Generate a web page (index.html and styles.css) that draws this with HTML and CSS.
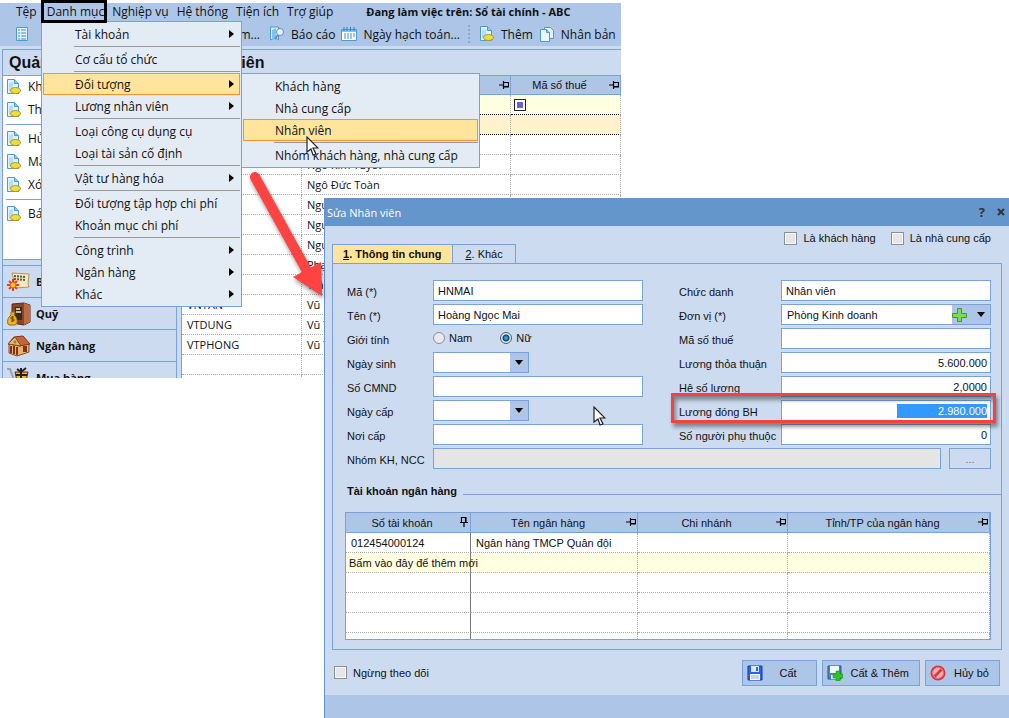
FILE: index.html
```html
<!DOCTYPE html>
<html lang="vi">
<head>
    <meta charset="UTF-8">
    <meta name="viewport" content="width=device-width, initial-scale=1.0">
    <title>Sửa Nhân viên</title>
    <link rel="stylesheet" href="styles.css">
</head>
<body>
    <svg class="symbols" aria-hidden="true">
        <symbol id="pin" viewBox="0 0 10 8">
            <path d="M0 4h4M4.500 0v8M5 1.500h4.500v4H5M5 6h5" fill="none" stroke="#000" stroke-width="1.2"/>
        </symbol>
        <symbol id="doc" viewBox="0 0 16 16">
            <path d="M1.500.5h7l4 4v10h-11z" fill="#dff1fc" stroke="#4a9bd0"/>
            <path d="M8.500.5v4h4" fill="#8ccaf0" stroke="#4a9bd0"/>
            <path d="M3 12V4l4-1v9z" fill="#b5def5"/>
            <ellipse cx="9.500" cy="11.500" rx="5" ry="3" fill="#f2dc3c" stroke="#a99a20"/>
            <path d="M5 11l-1 1M14 11l1 1M7 14l-1 1M12 14l1 1" stroke="#a99a20"/>
        </symbol>
        <symbol id="arrow" viewBox="0 0 5 8"><path d="M0 0l5 4-5 4z"/></symbol>
        <symbol id="down" viewBox="0 0 8 5"><path d="M0 0h8L4 5z"/></symbol>
        <symbol id="cursor" viewBox="0 0 13 20">
            <path d="M1 1v15l4-3 2 6 3-1-3-6h5z" fill="#fff" stroke="#222" stroke-width="1.2"/>
        </symbol>
    </svg>

    <div class="main-window">
        <div class="menubar">
            <a href="#">Tệp</a>
            <a href="#">Danh mục</a>
            <a href="#">Nghiệp vụ</a>
            <a href="#">Hệ thống</a>
            <a href="#">Tiện ích</a>
            <a href="#">Trợ giúp</a>
            <b>Đang làm việc trên: Sổ tài chính - ABC</b>
        </div>
        <div class="toolbar">
            <div class="toolbar-start">
                <button type="button" aria-label="Danh sách">
                    <svg class="icon" viewBox="0 0 16 16"><path d="M2.500 1.500h11v13h-11z" fill="#e3f3fd" stroke="#4a9bd0"/><path d="M4 4h2M4 7h2M4 10h2M4 13h2M7 4h5M7 7h5M7 10h5M7 13h5" stroke="#3e8fca"/></svg>
                </button>
                <button type="button">Tìm...</button>
            </div>
            <button type="button">
                <svg class="icon" viewBox="0 0 16 16"><path d="M1.500 1h8v13l-3-2-5 2z" fill="#d9f0fc" stroke="#4a9bd0"/><path d="M3 4l4-2v10l-4 2z" fill="#7cc4ee"/><circle cx="11" cy="6" r="3.500" fill="#eaf7ff" stroke="#5a8fc8"/><path d="M9 9l-3 4" stroke="#5a8fc8" stroke-width="2"/></svg>
                Báo cáo
            </button>
            <button type="button">
                <svg class="icon" viewBox="0 0 16 16"><path d="M.5 3.500h15v11H.5z" fill="#fff" stroke="#4a9bd0"/><path d="M1 4h14v2H1z" fill="#7cc4ee"/><path d="M3 1v4M6 1v4M9.500 1v4M13 1v4" stroke="#357fb8"/><path d="M3 8h2M6 8h2M9 8h2M12 8h2M3 10h2M6 10h2M9 10h2M12 10h2M3 12h2M6 12h2M9 12h2" stroke="#3e8fca"/></svg>
                Ngày hạch toán...
            </button>
            <span class="grip"></span>
            <button type="button"><svg class="icon"><use href="#doc"/></svg>Thêm</button>
            <button type="button">
                <svg class="icon" viewBox="0 0 16 16"><path d="M5.500 1.500h6l3 3v8h-9z" fill="#dff1fc" stroke="#4a9bd0"/><path d="M1.500 3.500h6l3 3v9h-9z" fill="#eef8fe" stroke="#4a9bd0"/><path d="M7.500 3.500v3h3" fill="#7cc4ee" stroke="#4a9bd0"/></svg>
                Nhân bản
            </button>
        </div>

        <div class="workspace">
            <div class="sidebar">
                <h2>Quản lý</h2>
                <div class="tasks">
                    <a href="#"><svg class="icon"><use href="#doc"/></svg>Khách</a>
                    <a href="#"><svg class="icon"><use href="#doc"/></svg>Thêm</a>
                    <hr>
                    <a href="#"><svg class="icon"><use href="#doc"/></svg>Hủy</a>
                    <a href="#"><svg class="icon"><use href="#doc"/></svg>Mẫu</a>
                    <a href="#"><svg class="icon"><use href="#doc"/></svg>Xóa</a>
                    <hr>
                    <a href="#"><svg class="icon"><use href="#doc"/></svg>Báo</a>
                </div>
                <div class="modules">
                    <a href="#">
                        <svg viewBox="0 0 24 24"><path d="M5 3l17 1-1 10 1 3-13 1z" fill="#f7e8bd" stroke="#b5935a"/><path d="M7 6l12 1M7 9l11 1" stroke="#555" stroke-width="2" stroke-dasharray="2 1"/><path d="M6 9v12M0 15h12M2 11l8 8M10 11l-8 8" stroke="#e8401e" stroke-width="2"/><circle cx="6" cy="15" r="2.500" fill="#ffc21e"/></svg>
                        Bàn
                    </a>
                    <a href="#">
                        <svg viewBox="0 0 24 24"><path d="M5 2l12-1 6 2v17l-6 3-12-2z" fill="#8a4526" stroke="#5b2a16"/><path d="M17 1l6 2v17l-6 3z" fill="#b86d44"/><path d="M8 5h7v13H8z" fill="#372c22"/><path d="M9 10h5M9 7h4" stroke="#c7c0a0" stroke-width="2"/><path d="M4 10h4l-1 3c4 3 4 9 1 10H2c-3-2-1-8 2-10z" fill="#f0b429" stroke="#9b6b12"/><path d="M7 15H4v2h3v2H4M5.500 14v6" stroke="#7a4a08" fill="none"/></svg>
                        Quỹ
                    </a>
                    <a href="#">
                        <svg viewBox="0 0 24 24"><path d="M2 10v9l8 3 12-4v-8z" fill="#e9b071" stroke="#8a4a20"/><path d="M1 10l6-7 9-1 7 8-10 2z" fill="#c9623a" stroke="#7c3517"/><path d="M1 10l7-7 6 9z" fill="#eeb36c" stroke="#8a4a20"/><path d="M4 12v7M7 12v8M10 13v8" stroke="#7c3517" stroke-width="2"/><path d="M16 12h4v6h-4z" fill="#7c3517"/><circle cx="8" cy="8" r="1.500" fill="#5d9d37"/></svg>
                        Ngân hàng
                    </a>
                    <a href="#">
                        <svg viewBox="0 0 24 24"><path d="M0 3h3l4 11h12" fill="none" stroke="#99a3ad" stroke-width="2"/><path d="M8 6h13l-2 9H10z" fill="#f5b51b" stroke="#40300a"/><path d="M14 2v13M9 9h11M10 3l4 3 5-4" fill="none" stroke="#222" stroke-width="2"/><circle cx="10" cy="20" r="2"/></svg>
                        Mua hàng
                    </a>
                </div>
            </div>
            <div class="list">
                <h2>Nhân viên</h2>
                <table class="grid staff">
                    <colgroup><col class="c-code"><col><col class="c-tax"></colgroup>
                    <thead>
                        <tr>
                            <th>Mã</th>
                            <th>Tên<svg class="pin"><use href="#pin"/></svg></th>
                            <th>Mã số thuế<svg class="pin"><use href="#pin"/></svg></th>
                        </tr>
                    </thead>
                    <tbody>
                        <tr class="filter"><td></td><td></td><td><span class="filter-mark"></span></td></tr>
                        <tr class="current"><td></td><td></td><td></td></tr>
                        <tr><td></td><td></td><td></td></tr>
                        <tr><td></td><td>Ngô Kim Tuyết</td><td></td></tr>
                        <tr><td></td><td>Ngô Đức Toàn</td><td></td></tr>
                        <tr><td></td><td>Nguyễn</td><td></td></tr>
                        <tr><td></td><td>Nguyễn</td><td></td></tr>
                        <tr><td></td><td>Nguyễn</td><td></td></tr>
                        <tr><td></td><td>Phạm</td><td></td></tr>
                        <tr><td></td><td>Trần</td><td></td></tr>
                        <tr><td>VNTAN</td><td>Vũ</td><td></td></tr>
                        <tr><td>VTDUNG</td><td>Vũ T</td><td></td></tr>
                        <tr><td>VTPHONG</td><td>Vũ T</td><td></td></tr>
                        <tr><td></td><td></td><td></td></tr>
                        <tr><td></td><td></td><td></td></tr>
                    </tbody>
                </table>
            </div>
        </div>
    </div>

    <div class="menu menu-main">
        <a href="#">Tài khoản<svg><use href="#arrow"/></svg></a>
        <hr>
        <a href="#">Cơ cấu tổ chức</a>
        <hr>
        <a href="#" class="active">Đối tượng<svg><use href="#arrow"/></svg></a>
        <a href="#">Lương nhân viên<svg><use href="#arrow"/></svg></a>
        <hr>
        <a href="#">Loại công cụ dụng cụ</a>
        <a href="#">Loại tài sản cố định</a>
        <hr>
        <a href="#">Vật tư hàng hóa<svg><use href="#arrow"/></svg></a>
        <hr>
        <a href="#">Đối tượng tập hợp chi phí</a>
        <a href="#">Khoản mục chi phí</a>
        <hr>
        <a href="#">Công trình<svg><use href="#arrow"/></svg></a>
        <a href="#">Ngân hàng<svg><use href="#arrow"/></svg></a>
        <a href="#">Khác<svg><use href="#arrow"/></svg></a>
    </div>
    <div class="menu menu-sub">
        <a href="#">Khách hàng</a>
        <a href="#">Nhà cung cấp</a>
        <a href="#" class="active">Nhân viên</a>
        <hr>
        <a href="#">Nhóm khách hàng, nhà cung cấp</a>
    </div>
    <div class="menu-frame"></div>
    <svg class="cursor cursor-menu"><use href="#cursor"/></svg>

    <form class="dialog">
        <div class="titlebar">
            <span>Sửa Nhân viên</span>
            <button type="button">?</button>
            <button type="button" aria-label="Đóng"><svg viewBox="0 0 8 8"><path d="M1 1l6 6M7 1L1 7" stroke="#333" stroke-width="2"/></svg></button>
        </div>
        <div class="dialog-body">
            <div class="dialog-top">
                <div class="tabs">
                    <button type="button" class="selected"><u>1</u>. Thông tin chung</button>
                    <button type="button"><u>2</u>. Khác</button>
                </div>
                <div class="kinds">
                    <label><input type="checkbox">Là khách hàng</label>
                    <label><input type="checkbox">Là nhà cung cấp</label>
                </div>
            </div>
            <div class="panel">
                <div class="fields">
                    <label for="code">Mã (*)</label>
                    <input type="text" id="code" value="HNMAI">
                    <label for="job" class="second">Chức danh</label>
                    <input type="text" id="job" value="Nhân viên">

                    <label for="name">Tên (*)</label>
                    <input type="text" id="name" value="Hoàng Ngọc Mai">
                    <label for="unit" class="second">Đơn vị (*)</label>
                    <div class="combo">
                        <select id="unit"><option>Phòng Kinh doanh</option></select>
                        <button type="button" aria-label="Thêm đơn vị"><svg class="icon" viewBox="0 0 16 16"><path d="M5.500 1.500h4v5h5v4h-5v4h-4v-4h-5v-4h5z" fill="#7ed957" stroke="#3c9b25"/></svg></button>
                        <span class="drop"><svg><use href="#down"/></svg></span>
                    </div>

                    <span>Giới tính</span>
                    <div class="radios">
                        <label><input type="radio" name="sex">Nam</label>
                        <label><input type="radio" name="sex" checked>Nữ</label>
                    </div>
                    <label for="tax" class="second">Mã số thuế</label>
                    <input type="text" id="tax">

                    <label for="birth">Ngày sinh</label>
                    <div class="combo date">
                        <select id="birth"><option></option></select>
                        <span class="drop"><svg><use href="#down"/></svg></span>
                    </div>
                    <label for="agreed" class="second">Lương thỏa thuận</label>
                    <input type="text" id="agreed" class="number" value="5.600.000">

                    <label for="idno">Số CMND</label>
                    <input type="text" id="idno">
                    <label for="rate" class="second">Hệ số lương</label>
                    <input type="text" id="rate" class="number" value="2,0000">

                    <label for="issued">Ngày cấp</label>
                    <div class="combo date">
                        <select id="issued"><option></option></select>
                        <span class="drop"><svg><use href="#down"/></svg></span>
                    </div>
                    <label for="insured" class="second">Lương đóng BH</label>
                    <div class="combo editing">
                        <input type="text" id="insured" class="number" value="2.980.000">
                        <div class="highlight"></div>
                    </div>

                    <label for="place">Nơi cấp</label>
                    <input type="text" id="place">
                    <label for="dependants" class="second">Số người phụ thuộc</label>
                    <input type="text" id="dependants" class="number" value="0">

                    <label for="group">Nhóm KH, NCC</label>
                    <div class="group">
                        <input type="text" id="group" disabled>
                        <button type="button" disabled>...</button>
                    </div>
                </div>
                <svg class="cursor cursor-form"><use href="#cursor"/></svg>

                <h3>Tài khoản ngân hàng</h3>
                <div class="accounts-box">
                    <table class="grid accounts">
                        <colgroup><col class="c-number"><col class="c-bank"><col class="c-branch"><col></colgroup>
                        <thead>
                            <tr>
                                <th>Số tài khoản<svg class="pin pinned"><use href="#pin"/></svg></th>
                                <th>Tên ngân hàng<svg class="pin"><use href="#pin"/></svg></th>
                                <th>Chi nhánh<svg class="pin"><use href="#pin"/></svg></th>
                                <th>Tỉnh/TP của ngân hàng<svg class="pin"><use href="#pin"/></svg></th>
                            </tr>
                        </thead>
                        <tbody>
                            <tr><td>012454000124</td><td>Ngân hàng TMCP Quân đội</td><td></td><td></td></tr>
                            <tr class="add"><td>Bấm vào đây để thêm mới</td><td></td><td></td><td></td></tr>
                            <tr><td></td><td></td><td></td><td></td></tr>
                            <tr><td></td><td></td><td></td><td></td></tr>
                            <tr><td></td><td></td><td></td><td></td></tr>
                            <tr><td></td><td></td><td></td><td></td></tr>
                        </tbody>
                    </table>
                </div>
            </div>
            <div class="actions">
                <label><input type="checkbox">Ngừng theo dõi</label>
                <button type="button">
                    <svg class="icon" viewBox="0 0 16 16"><path d="M1 1h14v14H1z" fill="#2f62ec" stroke="#1537b0"/><path d="M4 1h8v6H4z" fill="#dce8fb"/><path d="M9 2h2v4H9z" fill="#2f62ec"/><path d="M3 9h10v6H3z" fill="#fff"/><path d="M4 11h8M4 13h8" stroke="#8aa5e0"/></svg>
                    <span>Cất</span>
                </button>
                <button type="button">
                    <svg class="icon" viewBox="0 0 16 16"><path d="M1 1h13v13H1z" fill="#4b86bd" stroke="#245a8c"/><path d="M3 1h9v7H3z" fill="#f6fafd"/><path d="M4 10h7v4H4z" fill="#dce6ee"/><path d="M9 6h4v3h3v4h-3v3H9v-3H6V9h3z" fill="#2cc427" stroke="#15861a" stroke-width=".5"/></svg>
                    <span>Cất &amp; Thêm</span>
                </button>
                <button type="button">
                    <svg class="icon" viewBox="0 0 16 16"><circle cx="8" cy="8" r="7.500" fill="#e0303a"/><circle cx="8" cy="8" r="5" fill="#f3b5b8"/><path d="M4.500 11.500l7-7" stroke="#e0303a" stroke-width="2.500"/><circle cx="8" cy="8" r="5.500" fill="none" stroke="#f7c4c6" stroke-width=".5"/></svg>
                    <span>Hủy bỏ</span>
                </button>
            </div>
        </div>
        <div class="statusbar"></div>
    </form>

    <svg class="red-arrow" viewBox="0 0 80 130">
        <path d="M10 7L62 101" stroke="#ff4242" stroke-width="10" stroke-linecap="round"/>
        <path d="M48 107l28-15 1 34z" fill="#ff4242"/>
    </svg>
</body>
</html>
```
FILE: styles.css
```css
* {
    box-sizing: border-box;
}

body {
    margin: 0;
    min-height: 100vh;
    background-color: #fff;
    color: #111;
    font-family: "Open Sans", "Noto Sans", sans-serif;
    font-size: 12px;
    position: relative;
    overflow: hidden;
}

a {
    color: inherit;
    text-decoration: none;
}

button {
    font: inherit;
    color: inherit;
    border: none;
    background: none;
    padding: 0;
    white-space: nowrap;
}

h2, h3 {
    margin: 0;
}

.symbols {
    display: none;
}

.icon {
    width: 16px;
    height: 16px;
    flex: none;
}

/* main window */
.main-window {
    position: absolute;
    top: 3px;
    left: 0;
    right: 388px;
    bottom: 340px;
    overflow: hidden;
    display: flex;
    flex-direction: column;
    background-color: #cddbf0;
}

.menubar {
    display: flex;
    gap: 8px;
    padding-left: 16px;
    height: 19px;
    line-height: 18px;
    background-color: #adc6e7;
    white-space: nowrap;
}

.menubar a:first-child {
    margin-right: 2px;
}

.menubar b {
    margin-left: 25px;
    font-size: 11px;
}

.toolbar {
    display: flex;
    align-items: center;
    gap: 6px;
    height: 24px;
    background-color: #adc6e7;
    white-space: nowrap;
}

.toolbar button {
    display: flex;
    align-items: center;
    gap: 6px;
}

.toolbar-start {
    display: flex;
    justify-content: space-between;
    flex: none;
    width: 263px;
    padding: 0 3px 0 14px;
}

.grip {
    width: 3px;
    height: 18px;
    margin: 0 2px;
    border-left: 2px dotted #8fa9cc;
}

.workspace {
    display: flex;
    gap: 4px;
    flex: 1;
    min-height: 0;
    padding: 3px 0 0 2px;
}

.workspace h2 {
    height: 26px;
    padding-left: 6px;
    border-top: 1px solid #7aa2d6;
    font-family: "Liberation Sans", sans-serif;
    font-size: 16px;
    line-height: 25px;
}

.sidebar {
    width: 175px;
    flex: none;
    border-left: 1px solid #7aa2d6;
    border-right: 1px solid #7aa2d6;
}

.tasks {
    height: 185px;
    padding: 0 4px 0 3px;
    background-color: #fff;
    border-top: 1px solid #7aa2d6;
    border-bottom: 1px solid #7aa2d6;
}

.tasks a {
    display: flex;
    align-items: center;
    gap: 6px;
    height: 23px;
    padding-bottom: 2px;
}

.tasks hr {
    margin: 2px 0 3px;
    border: none;
    border-top: 1px solid #7aa2d6;
}

.modules {
    margin-top: 5px;
}

.modules a {
    display: flex;
    align-items: center;
    gap: 5px;
    height: 32px;
    padding-left: 4px;
    border-top: 1px solid #7aa2d6;
    font-size: 11px;
    font-weight: bold;
}

.modules svg {
    width: 24px;
    height: 24px;
}

.list {
    flex: 1;
    min-width: 0;
    border-left: 1px solid #7aa2d6;
}

/* grids */
.grid {
    width: 100%;
    table-layout: fixed;
    border-collapse: separate;
    border-spacing: 0;
    background-color: #fff;
    font-size: 11px;
}

.grid th {
    position: relative;
    height: 20px;
    padding: 0 18px 0 6px;
    border-top: 1px solid #7aa2d6;
    border-right: 1px solid #7aa2d6;
    border-bottom: 1px solid #7aa2d6;
    background-color: #adc6e7;
    font-family: "Liberation Sans", sans-serif;
    font-weight: normal;
    line-height: 16px;
    white-space: nowrap;
}

.grid td {
    height: 20px;
    padding: 0 5px;
    border-right: 1px dotted #aaa;
    border-bottom: 1px dotted #aaa;
    line-height: 18px;
    white-space: nowrap;
}

.pin {
    position: absolute;
    right: 1px;
    top: 5px;
    width: 10px;
    height: 8px;
}

.pinned {
    transform: rotate(-90deg);
}

.c-code {
    width: 120px;
}

.c-tax {
    width: 110px;
}

.staff .filter td {
    background-color: #ffffe1;
    border-bottom-color: #000;
}

.staff .current td {
    background-color: #fff2cc;
    border-bottom-color: #000;
}

.filter-mark {
    display: block;
    width: 12px;
    height: 12px;
    margin-left: -2px;
    border: 1px solid #223;
    background-color: #66c;
    box-shadow: inset 0 0 0 2px #fff;
}

/* menus */
.menu {
    position: absolute;
    padding: 1px;
    border: 1px solid #7aa2d6;
    background-color: #e3ebf4;
}

.menu a {
    display: flex;
    align-items: center;
    justify-content: space-between;
    height: 22px;
    padding: 0 5px 0 31px;
    border: 1px solid transparent;
    white-space: nowrap;
}

.menu a.active {
    background-color: #ffe49c;
    border-color: #f59331;
}

.menu svg {
    width: 5px;
    height: 8px;
}

.menu hr {
    margin: 1px 0 1px 31px;
    border: none;
    border-top: 1px solid #999;
}

.menu-main {
    top: 21px;
    left: 41px;
    width: 201px;
}

.menu-sub {
    top: 73px;
    left: 241px;
    width: 239px;
}

.menu-frame {
    position: absolute;
    top: 0;
    left: 41px;
    width: 66px;
    height: 23px;
    border: 3px solid #000;
}

.cursor {
    position: absolute;
    width: 13px;
    height: 20px;
}

.cursor-menu {
    top: 136px;
    left: 306px;
}

.cursor-form {
    top: 142px;
    left: 260px;
}

.red-arrow {
    position: absolute;
    top: 170px;
    left: 245px;
    width: 80px;
    height: 130px;
    filter: drop-shadow(1px 3px 2px rgba(0, 0, 0, 0.4));
}

/* dialog */
.dialog {
    position: absolute;
    top: 198px;
    left: 324px;
    right: 0;
    bottom: 0;
    display: flex;
    flex-direction: column;
    border-left: 1px solid #6496cb;
    background-color: #cddbf0;
    font-family: "Liberation Sans", sans-serif;
    font-size: 11px;
}

.titlebar {
    display: flex;
    align-items: center;
    gap: 12px;
    height: 28px;
    padding: 0 4px 0 2px;
    background-color: #6496cb;
    color: #fff;
    font-family: "Open Sans", "Noto Sans", sans-serif;
}

.titlebar span {
    flex: 1;
}

.titlebar button {
    color: #333;
    font-size: 13px;
    font-weight: bold;
}

.titlebar svg {
    display: block;
    width: 8px;
    height: 8px;
}

.dialog-body {
    flex: 1;
    padding: 0 7px;
}

.dialog-top {
    display: flex;
    justify-content: space-between;
    height: 37px;
}

.tabs {
    display: flex;
    align-items: flex-end;
}

.tabs button {
    height: 19px;
    padding: 0 12px;
    border: 1px solid #7aa2d6;
    border-bottom: none;
    border-left: none;
}

.tabs .selected {
    padding: 0 11px 0 10px;
    border-left: 1px solid #7aa2d6;
    background-color: #ffe49c;
    font-weight: bold;
}

.kinds {
    display: flex;
    gap: 15px;
    height: 24px;
    padding-right: 11px;
}

.dialog label {
    display: flex;
    align-items: center;
}

.dialog input[type="checkbox"] {
    appearance: none;
    width: 13px;
    height: 13px;
    margin: 0 6px 0 0;
    border: 1px solid #8a8f94;
    background-color: #e4e6ea;
    box-shadow: inset 0 0 0 1px #f8f8f8;
}

.dialog input[type="radio"] {
    appearance: none;
    width: 12px;
    height: 12px;
    margin: 0 4px 0 0;
    border: 1px solid #8a8f94;
    border-radius: 50%;
    background-color: #e8eaec;
}

.dialog input[type="radio"]:checked {
    border-color: #45607a;
    background: radial-gradient(circle, #36a5dc 1px, #0d3f68 3px, #e8eaec 4px);
}

.panel {
    position: relative;
    padding: 16px 10px 9px 12px;
    border: 1px solid #7aa2d6;
}

.fields {
    display: grid;
    grid-template-columns: 86px 1fr 138px 1fr;
    grid-auto-rows: 21px;
    row-gap: 3px;
    padding-left: 2px;
}

.fields > label,
.fields > span {
    padding-top: 3px;
    line-height: 18px;
    white-space: nowrap;
}

.fields .second {
    padding-left: 36px;
}

.fields > input,
.combo,
.group input {
    width: 100%;
    min-width: 0;
    height: 21px;
    padding: 0 4px;
    border: 1px solid #7aa2d6;
    background-color: #fff;
    font: inherit;
    color: #111;
}

.fields > .number {
    padding: 0 3px;
}

.number {
    text-align: right;
}

.combo {
    display: flex;
    padding: 0;
}

.date {
    width: 96px;
}

.combo select {
    flex: 1;
    min-width: 0;
    appearance: none;
    padding: 0 5px;
    border: none;
    background: none;
    font: inherit;
    color: inherit;
}

.combo button {
    width: 20px;
    background-color: #adc6e7;
}

.combo button svg {
    display: block;
}

.drop {
    display: flex;
    align-items: center;
    justify-content: center;
    width: 18px;
    background-color: #adc6e7;
}

.drop svg {
    width: 8px;
    height: 5px;
}

.editing {
    position: relative;
    align-items: center;
    justify-content: flex-end;
    padding-right: 3px;
}

.editing .number {
    width: 90px;
    height: 14px;
    padding: 0;
    border: none;
    background-color: #3399ff;
    color: #fff;
    font: inherit;
}

/* red frame around the label and its field */
.highlight {
    position: absolute;
    top: -8px;
    left: -111px;
    right: -6px;
    height: 30px;
    border: 3px solid #f8403f;
    box-shadow: 2px 4px 4px rgba(0, 0, 0, 0.4), inset 2px 4px 4px rgba(0, 0, 0, 0.4);
    pointer-events: none;
}

.radios {
    display: flex;
    gap: 28px;
    height: 20px;
}

.group {
    display: flex;
    gap: 8px;
    grid-column: 2 / 5;
}

.group input {
    flex: 1;
    background-color: #e5e5e5;
}

.group button {
    width: 42px;
    border: 1px solid #7aa2d6;
    color: #777;
}

.panel h3 {
    display: flex;
    align-items: center;
    gap: 6px;
    height: 43px;
    margin-right: -10px;
    padding-left: 2px;
    font-size: 11px;
}

.panel h3::after {
    content: "";
    flex: 1;
    margin-top: 7px;
    border-top: 1px solid #7aa2d6;
}

.accounts-box {
    height: 128px;
    overflow: hidden;
    border: 1px solid #7aa2d6;
    border-top: none;
    background-color: #fff;
}

.accounts th {
    height: 21px;
}

.accounts td:first-child {
    border-right: 1px solid #777;
}

.accounts .add td {
    padding: 0 3px;
    background-color: #ffffe1;
}

.c-number {
    width: 125px;
}

.c-bank {
    width: 167px;
}

.c-branch {
    width: 150px;
}

.actions {
    display: flex;
    align-items: center;
    gap: 5px;
    height: 45px;
    padding: 0 2px;
}

.actions label {
    flex: 1;
}

.actions button {
    display: flex;
    align-items: center;
    height: 26px;
    min-width: 75px;
    padding: 0 10px 0 4px;
    border: 1px solid #7aa2d6;
    background-color: #adc6e7;
}

.actions button span {
    flex: 1;
    padding-left: 8px;
    text-align: center;
}

.statusbar {
    height: 23px;
    background-color: #adc6e7;
}
```
